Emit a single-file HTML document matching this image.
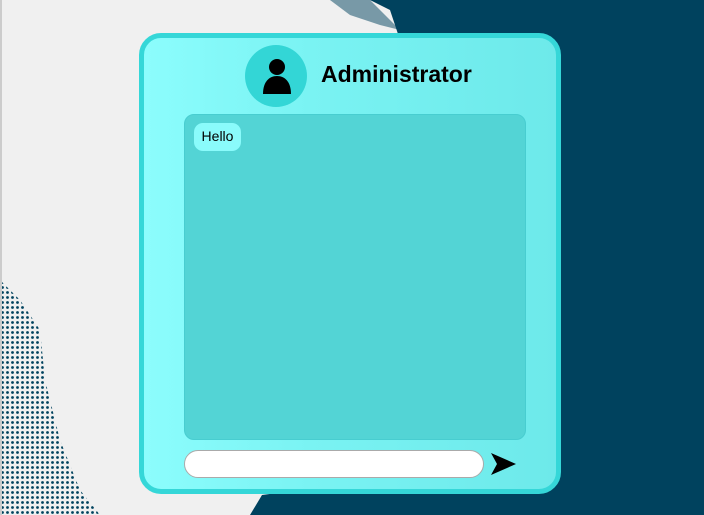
<!DOCTYPE html>
<html><head><style>
body{margin:0;width:704px;height:515px;overflow:hidden;background:#f0f0f0;position:relative;font-family:"Liberation Sans",sans-serif}
.bgl{position:absolute;left:0;top:0;width:2px;height:515px;background:#ccc}
.card{position:absolute;left:139px;top:33px;width:412px;height:451px;border:5px solid #35d7d8;border-radius:22px;background:linear-gradient(90deg,#8cfdfd 0%,#7af3f3 40%,#6de9ea 100%)}
.av{position:absolute;left:245px;top:45px;width:62px;height:62px;border-radius:50%;background:#33d6d6}
.name{position:absolute;left:321px;top:61px;font-size:23px;font-weight:bold;color:#000;letter-spacing:0}
.chat{position:absolute;left:184px;top:114px;width:340px;height:324px;border:1px solid #48cdd0;border-radius:10px;background:#53d4d5}
.msg{position:absolute;left:194px;top:123px;width:47px;height:28px;border-radius:9px;background:#8afbfb;font-size:14px;line-height:27px;text-align:center;color:#000}
.inp{position:absolute;left:184px;top:450px;width:298px;height:26px;border:1px solid #aaa;border-radius:14px;background:#fff}
</style></head><body>
<svg width="704" height="515" style="position:absolute;left:0;top:0">
<defs><pattern id="d" width="5" height="5" patternUnits="userSpaceOnUse"><circle cx="2.5" cy="2.5" r="1.4" fill="#00425e"/></pattern></defs>
<polygon fill="#00425e" points="430,0 704,0 704,515 250,515 262,495 300,490 330,470 360,480 400,470 560,470 560,300 520,200 470,130 420,80 400,40 390,10 370,0" />
<polygon fill="#00425e" opacity="0.5" points="330,0 370,0 400,30 380,25 350,15"/>
<polygon fill="url(#d)" points="0,280 20,300 40,330 45,380 60,440 80,490 100,515 0,515"/>
</svg>
<div class="bgl"></div>
<div class="card"></div>
<div class="av"></div>
<svg width="30" height="38" style="position:absolute;left:262px;top:58px" viewBox="0 0 30 38">
<circle cx="15" cy="9" r="8" fill="#000"/>
<path d="M1 36 C1 24 7 18 15 18 C23 18 29 24 29 36 Z" fill="#000"/>
</svg>
<div class="name">Administrator</div>
<div class="chat"></div>
<div class="msg">Hello</div>
<div class="inp"></div>
<svg width="26" height="24" style="position:absolute;left:491px;top:452px" viewBox="0 0 26 24">
<path d="M0 1 L25 12 L0 23 L6 12 Z" fill="#000"/>
</svg>
</body></html>
